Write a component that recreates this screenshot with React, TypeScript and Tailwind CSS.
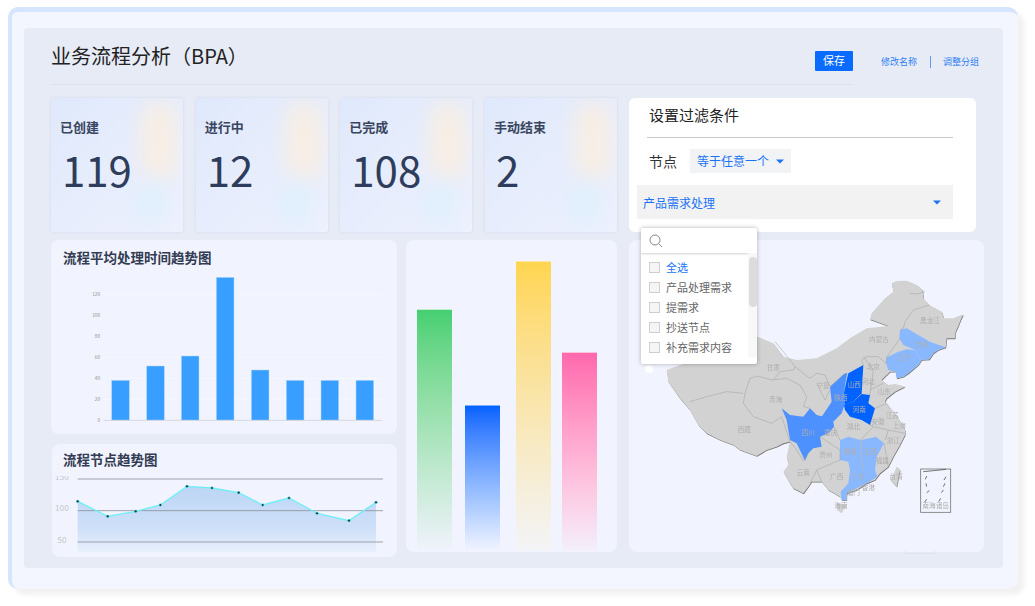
const stats = [
  { label: "已创建", value: "119" },
  { label: "进行中", value: "12" },
  { label: "已完成", value: "108" },
  { label: "手动结束", value: "2" },
]

const options = ["全选", "产品处理需求", "提需求", "抄送节点", "补充需求内容"]

const barX = [215, 320, 424, 529, 634, 739, 843, 948]
const barTop = [421, 378, 348, 112, 390, 421, 421, 421]
const ticks = [
  { y: 162, t: "120" },
  { y: 225, t: "100" },
  { y: 288, t: "80" },
  { y: 352, t: "60" },
  { y: 415, t: "40" },
  { y: 478, t: "20" },
]

const trend = [
  [113, 184],
  [203, 229],
  [287, 214],
  [361, 195],
  [441, 139],
  [516, 144],
  [596, 158],
  [668, 195],
  [747, 174],
  [831, 220],
  [927, 242],
  [1008, 187],
]

const country =
  "M755 40L770 33L800 32L830 45L848 60L850 85L868 105L905 125L912 145L940 145L970 133L962 150L955 168L947 185L945 205L920 205L917 232L895 240L880 250L868 268L845 270L835 285L805 310L790 320L770 325L767 305L750 305L725 330L745 345L765 342L795 350L765 365L740 385L735 395L755 425L775 445L795 480L795 495L780 525L760 560L745 590L720 610L705 630L680 640L650 660L620 670L620 690L605 690L600 680L565 660L545 635L515 635L505 650L490 670L460 655L450 640L430 605L445 585L440 560L450 515L430 520L410 530L380 540L350 558L300 540L280 525L240 510L200 490L175 465L150 420L120 385L85 335L80 300L120 285L250 240L352 200L400 220L430 260L470 270L530 265L590 235L630 205L680 175L745 168L690 148L695 130L735 85L760 65Z"

const regions = [
  { fill: "#8ab8ff", d: "M780 180L800 175L835 195L870 215L917 232L895 240L880 250L868 268L845 270L825 240L790 225L778 205Z" },
  { fill: "#8ab8ff", d: "M740 262L775 245L800 238L825 240L845 270L835 285L805 310L790 320L770 325L767 305L745 300L738 280Z" },
  { fill: "#4d90ff", d: "M612 312L622 308L615 345L612 375L615 400L605 430L580 455L545 440L575 395L570 350Z" },
  { fill: "#4d90ff", d: "M425 415L450 435L490 440L510 415L530 435L550 440L580 455L582 470L565 490L540 500L545 530L520 535L505 550L495 572L470 520L450 510L440 450Z" },
  { fill: "#0062ff", d: "M625 310L670 285L668 320L665 370L640 395L615 405L612 370L618 340Z" },
  { fill: "#0062ff", d: "M612 405L640 395L665 372L690 375L685 400L705 415L690 465L665 450L630 440L615 420Z" },
  { fill: "#8ab8ff", d: "M600 510L625 500L662 510L662 560L668 600L630 600L625 575L600 570Z" },
  { fill: "#8ab8ff", d: "M664 510L708 500L732 520L710 560L705 600L670 600L664 560Z" },
  { fill: "#8ab8ff", d: "M630 600L705 600L712 620L680 640L640 660L620 670L620 690L605 690L602 665L625 640Z" },
]

const borders = [
  "M810 70L830 72L855 65",
  "M868 105L820 120L795 155L790 175L780 180",
  "M780 205L740 262L738 280L715 260L680 260L665 270L670 285",
  "M610 315L570 350L555 315L530 310L510 325L490 310L465 290L430 245L405 215",
  "M352 318L395 330L440 325L480 345L500 380L490 410L510 415",
  "M465 290L460 300L420 305L400 330",
  "M352 318L330 325L315 370L310 400L340 440L395 460L425 440",
  "M150 395L200 380L260 365L310 370",
  "M425 440L450 515",
  "M530 340L555 390L570 360",
  "M670 260L700 300L690 375",
  "M690 360L730 340",
  "M705 415L740 400L775 445",
  "M700 470L745 480L735 510",
  "M745 480L795 490",
  "M732 520L745 590",
  "M582 470L600 510M662 510L700 470L690 465",
  "M540 500L600 540L600 570L530 600L545 635",
  "M505 550L490 572L470 540L450 515",
  "M530 600L510 640",
  "M663 510L663 560L669 600",
]

const mapLabels: [string, number, number][] = [
  ["黑龙江", 870, 153],
  ["吉林", 845, 225],
  ["辽宁", 793, 263],
  ["内蒙古", 717, 210],
  ["北京", 700, 290],
  ["河北", 685, 335],
  ["山西", 643, 343],
  ["山东", 733, 366],
  ["陕西", 603, 383],
  ["河南", 658, 418],
  ["宁夏", 550, 348],
  ["甘肃", 400, 293],
  ["青海", 407, 388],
  ["西藏", 313, 480],
  ["四川", 505, 488],
  ["重庆", 572, 488],
  ["湖北", 640, 470],
  ["安徽", 714, 455],
  ["江苏", 757, 437],
  ["上海", 778, 467],
  ["浙江", 760, 512],
  ["湖南", 630, 545],
  ["江西", 690, 545],
  ["贵州", 558, 555],
  ["云南", 490, 607],
  ["广西", 590, 620],
  ["广东", 655, 620],
  ["福建", 727, 573],
  ["台湾", 768, 620],
  ["香港", 685, 653],
  ["澳门", 640, 668],
  ["海南", 603, 708],
]

function Caret() {
  return (
    <svg width="8" height="5" viewBox="0 0 8 5" className="shrink-0">
      <path d="M0 0.5H8L4 4.5Z" fill="#1a73f5" />
    </svg>
  )
}

function StatCard({ label, value }: { label: string; value: string }) {
  return (
    <div className="relative h-[134px] w-[132px] overflow-hidden rounded-[3px] bg-linear-to-br from-[#dfe9fb] to-[#eff1fe] shadow-[0_0_3px_rgba(120,135,170,0.18)]">
      <div className="absolute left-[90px] top-[4px] h-[78px] w-[36px] rounded-full bg-[#f7eee4] blur-[10px]" />
      <div className="absolute left-[80px] top-[84px] h-[44px] w-[38px] rounded-full bg-[#e0effc] blur-[10px]" />
      <div className="relative pl-[9px] pt-[20px] text-[13px] font-semibold leading-[18px] text-[#3a4560]">{label}</div>
      <div className="relative pl-[11px] pt-[8px] text-[42px] leading-[50px] text-[#2f3d5c]">{value}</div>
    </div>
  )
}

function FilterCard() {
  return (
    <div className="relative ml-[12px] h-[134px] w-[347px] rounded-[6px] bg-white">
      <div className="pl-[20px] pt-[7px] text-[15px] leading-[20px] text-[#222]">设置过滤条件</div>
      <div className="ml-[18px] mt-[12px] h-px w-[306px] bg-[#c9c9c9]" />
      <div className="mt-[11px] flex items-center">
        <span className="ml-[20px] w-[41px] text-[14px] leading-[24px] text-[#333]">节点</span>
        <div className="flex h-[24px] w-[101px] items-center gap-[7px] bg-[#f2f3f5] pl-[7px] text-[12px] text-[#1a73f5]">
          等于任意一个
          <Caret />
        </div>
      </div>
      <div className="ml-[8px] mt-[12px] flex h-[34px] w-[316px] items-center justify-between bg-[#f2f2f2] pl-[6px] pr-[12px] pt-px text-[12px] text-[#1a73f5]">
        产品需求处理
        <Caret />
      </div>
      <div className="absolute left-[12px] top-[130px] z-10 h-[136px] w-[116px] overflow-hidden rounded-[2px] bg-white shadow-[0_0_4px_rgba(0,0,0,0.3)]">
        <div className="flex h-[25px] items-center pl-[8px] shadow-[0_1px_2px_rgba(0,0,0,0.18)]">
          <svg width="14" height="14" viewBox="0 0 14 14" fill="none" stroke="#8a8a8a" strokeWidth="1">
            <circle cx="6" cy="6" r="5" />
            <path d="M9.8 9.8L13 13" />
          </svg>
        </div>
        <div className="relative pl-[8px] pt-[4px]">
          {options.map((o, i) => (
            <div key={o} className="flex h-[20px] items-center gap-[6px]">
              <span className="h-[11px] w-[11px] border border-[#cfcfcf] bg-[#f5f5f5]" />
              <span className={i === 0 ? "text-[11px] text-[#1a73f5]" : "text-[11px] text-[#666]"}>{o}</span>
            </div>
          ))}
          <div className="absolute right-0 top-0 h-full w-[9px] bg-[#f8f8f8]">
            <div className="ml-[1px] mt-[4px] h-[50px] w-[8px] rounded-[4px] bg-[#dcdcdc]" />
          </div>
        </div>
      </div>
    </div>
  )
}

function AvgChart() {
  return (
    <div className="h-[194px] rounded-[8px] bg-[#f1f4fe]">
      <div className="pl-[12px] pt-[8px] text-[13.5px] font-semibold leading-[18px] text-[#333c52]">流程平均处理时间趋势图</div>
      <svg width="346" height="158" viewBox="33 108 1038 474" className="mt-[10px] block">
        {ticks.map((k) => (
          <g key={k.t}>
            <line x1="190" x2="1027" y1={k.y} y2={k.y} stroke="#ffffff" strokeWidth="2" strokeDasharray="3 3" />
            <text x="180" y={k.y + 5} textAnchor="end" fontSize="14" fill="#8a8a8a">
              {k.t}
            </text>
          </g>
        ))}
        <text x="180" y="546" textAnchor="end" fontSize="14" fill="#8a8a8a">
          0
        </text>
        {barX.map((x, i) => (
          <rect key={x} x={x} y={barTop[i]} width="53" height={541 - barTop[i]} fill="#389eff" stroke="#b5d8fb" strokeWidth="1.5" />
        ))}
        <line x1="190" x2="1027" y1="541" y2="541" stroke="#d6d8de" strokeWidth="3" />
      </svg>
    </div>
  )
}

function TrendChart() {
  const line = trend.map((p) => p.join(",")).join(" ")
  return (
    <div className="ml-px h-[113px] overflow-hidden rounded-[8px] bg-[#f1f4fe]">
      <div className="pl-[11px] pt-[6px] text-[13.5px] font-semibold leading-[18px] text-[#333c52]">流程节点趋势图</div>
      <svg width="345" height="81" viewBox="36 108 1035 243" className="mt-[8px] block">
        <defs>
          <linearGradient id="trendFill" x1="0" y1="0" x2="0" y2="1">
            <stop offset="0" stopColor="#bcd6f5" />
            <stop offset="0.65" stopColor="#cfe0f9" />
            <stop offset="1" stopColor="#e9f0fc" />
          </linearGradient>
        </defs>
        <polygon points={`113,337 ${line} 1008,337`} fill="url(#trendFill)" />
        {[117, 212, 306].map((y) => (
          <line key={y} x1="113" x2="1029" y1={y} y2={y} stroke="#8f8f96" strokeWidth="2.5" />
        ))}
        <text x="45" y="119" fontSize="25" fill="#c4c6cc">
          150
        </text>
        <text x="45" y="213" fontSize="25" fill="#c4c6cc">
          100
        </text>
        <text x="52" y="308" fontSize="25" fill="#c4c6cc">
          50
        </text>
        <polyline points={line} fill="none" stroke="#6ff0f5" strokeWidth="4" />
        {trend.map((p) => (
          <circle key={p[0]} cx={p[0]} cy={p[1]} r="4" fill="#12303f" stroke="#6ff0f5" strokeWidth="1.5" />
        ))}
      </svg>
    </div>
  )
}

function GradientBars() {
  return (
    <div className="ml-[9px] flex h-[312px] w-[211px] items-end rounded-[8px] bg-[#f1f4fe] pl-[11px] pb-px">
      <div className="h-[242px] w-[35px] border-t border-[#c6e9d2] bg-linear-to-b from-[#45d072] to-[#f0f3fc]" />
      <div className="ml-[13px] h-[146px] w-[35px] border-t border-[#7fb0ff] bg-linear-to-b from-[#0062ff] to-[#f1f4ff]" />
      <div className="ml-[16px] h-[290px] w-[35px] border-t border-[#fbe6a5] bg-linear-to-b from-[#ffd54f] to-[#f3f4f8]" />
      <div className="ml-[11px] h-[199px] w-[35px] border-t border-[#fbc2dc] bg-linear-to-b from-[#ff68ad] to-[#f3effb]" />
    </div>
  )
}

function ChinaMap() {
  return (
    <div className="relative ml-[12px] h-[312px] w-[355px] rounded-[8px] bg-[#f1f4fe]">
      <svg width="355" height="312" viewBox="-33 -90 1065 936" className="block blur-[0.3px]">
        <path d={country} fill="#777" transform="translate(1.5 2.5)" />
        <path d={country} fill="#d2d2d2" />
        <path d="M770 590L780 600L770 650L752 630Z" fill="#777" transform="translate(1.5 2.5)" />
        <path d="M770 590L780 600L770 650L752 630Z" fill="#d2d2d2" />
        <path d="M590 700L620 705L605 730L590 720Z" fill="#d2d2d2" />
        {regions.map((r) => (
          <path key={r.d} d={r.d} fill={r.fill} />
        ))}
        {borders.map((d) => (
          <path key={d} d={d} fill="none" stroke="#9c9c9c" strokeWidth="1.4" />
        ))}
        {mapLabels.map(([t, x, y]) => (
          <text key={t} x={x} y={y + 7} textAnchor="middle" fontSize="20" fill="#aeaeae">
            {t}
          </text>
        ))}
        <rect x="842" y="597" width="90" height="130" fill="none" stroke="#777" strokeWidth="2.5" />
        <path d="M850 605L880 602L918 598M860 618L856 628M918 620L912 630M858 640L860 650M915 640L910 650M860 668L868 662M910 660L904 668M902 685L896 695M860 688L854 696" fill="none" stroke="#555" strokeWidth="2.5" />
        <text x="887" y="714" textAnchor="middle" fontSize="20" fill="#aeaeae">
          南海诸岛
        </text>
      </svg>
      <div className="absolute left-[16px] top-[125px] h-[8px] w-[8px] rounded-full bg-white" />
      <div className="absolute bottom-[-2px] left-[276px] h-[3px] w-[30px] border-x border-b border-[#dfe2ea]" />
    </div>
  )
}

export default function App() {
  return (
    <div className="h-[606px] w-[1035px] overflow-hidden bg-white pl-[8px] pt-[7px] font-['Noto_Sans_CJK_SC','Noto_Sans',sans-serif]">
      <div className="h-[582px] w-[1010px] rounded-[10px] border-l-4 border-t-[5px] border-[#d6e5fe] bg-[#f3f6fe] pl-[12px] pt-[16px] shadow-[6px_6px_5px_rgba(0,0,0,0.06)]">
        <div className="h-[540px] w-[979px] rounded-[4px] bg-[#e6ebf6] pl-[27px]">
          <div className="flex h-[57px]">
            <div className="flex w-[803px] items-center justify-between border-b border-[#dfe3ee] pr-px">
              <h1 className="text-[20px] font-normal leading-[56px] text-[#222]">业务流程分析（BPA）</h1>
              <button className="mt-[9px] h-[20px] w-[38px] rounded-[1px] bg-[#0a6cff] text-[11px] text-white">保存</button>
            </div>
            <div className="ml-[27px] mt-[28px] flex h-[12px] items-center text-[9px] text-[#2f7ff5]">
              <span className="w-[37px]">修改名称</span>
              <span className="mx-[12px] h-[12px] w-px bg-[#5b9bf6]" />
              <span className="w-[37px]">调整分组</span>
            </div>
          </div>
          <div className="mt-[13px] flex">
            <div className="flex w-[566px] justify-between">
              {stats.map((s) => (
                <StatCard key={s.label} {...s} />
              ))}
            </div>
            <FilterCard />
          </div>
          <div className="mt-[8px] flex">
            <div className="flex w-[346px] flex-col gap-[10px]">
              <AvgChart />
              <TrendChart />
            </div>
            <GradientBars />
            <ChinaMap />
          </div>
        </div>
      </div>
    </div>
  )
}
